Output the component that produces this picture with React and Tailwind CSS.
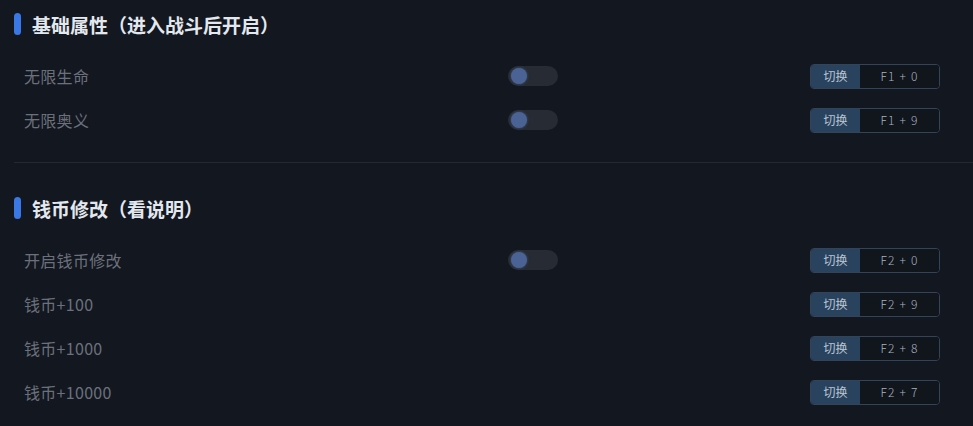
import React from 'react';

const sections = [
  {
    title: '基础属性（进入战斗后开启）',
    rows: [
      { label: '无限生命', toggle: true, key: 'F1 + 0' },
      { label: '无限奥义', toggle: true, key: 'F1 + 9' },
    ],
  },
  {
    title: '钱币修改（看说明）',
    rows: [
      { label: '开启钱币修改', toggle: true, key: 'F2 + 0' },
      { label: '钱币+100', toggle: false, key: 'F2 + 9' },
      { label: '钱币+1000', toggle: false, key: 'F2 + 8' },
      { label: '钱币+10000', toggle: false, key: 'F2 + 7' },
    ],
  },
];

const Toggle = () => (
  <div className="relative w-[50px] h-5 rounded-full bg-[#272b33]">
    <div className="absolute left-[3px] top-[2px] w-4 h-4 rounded-full bg-[#4a6394] shadow-[0_0_3px_rgba(74,99,148,0.8)]" />
  </div>
);

const HotKey = ({ value }) => (
  <div className="flex w-[130px] h-[25px] rounded-[4px] border border-[#34435a] overflow-hidden text-[12px] leading-none">
    <div className="w-[49px] flex items-center justify-center bg-[#29435f] text-[#b9c5d3]">切换</div>
    <div className="flex-1 flex items-center justify-center bg-[#11151c] text-[#a8b3c1] tracking-[1.2px] font-light">{value}</div>
  </div>
);

export default function App() {
  return (
    <div
      className="w-[973px] h-[426px] overflow-hidden bg-[#13171f] pl-[14px]"
      style={{ fontFamily: '"Noto Sans CJK SC", "Noto Sans", sans-serif' }}
    >
      {sections.map((section, i) => (
        <div key={section.title} className={i > 0 ? 'border-t border-[#232831] pt-[21px]' : 'pb-5'}>
          {/* section header */}
          <div className="h-12 flex items-center gap-[11px]">
            <div className="w-[7px] h-[22px] rounded-full bg-[#3a78e6]" />
            <h2 className="text-[19px] font-bold text-[#e3e8ef] leading-none">{section.title}</h2>
          </div>

          <div className="mt-[6px] pl-[10px] pr-[33px]">
            {section.rows.map(row => (
              <div key={row.label} className="h-11 flex items-center">
                <div className="w-[484px] text-[16px] text-[#6b717c] tracking-[0.3px]">{row.label}</div>
                <div className="flex-1">{row.toggle && <Toggle />}</div>
                <HotKey value={row.key} />
              </div>
            ))}
          </div>
        </div>
      ))}
    </div>
  );
}
